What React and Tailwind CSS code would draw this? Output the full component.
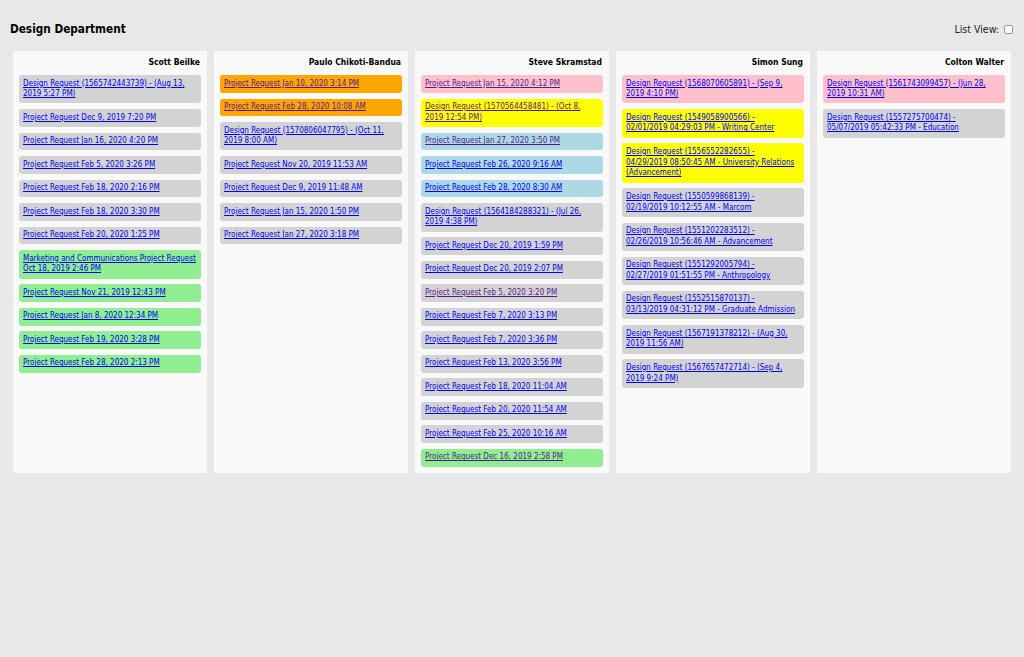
import React from "react";

const BG = {
  gray: "bg-[#d3d3d3]",
  green: "bg-[#90ee90]",
  orange: "bg-[#ffa500]",
  pink: "bg-[#ffc0cb]",
  yellow: "bg-[#ffff00]",
  blue: "bg-[#add8e6]",
};

const columns = [
  {
    name: "Scott Beilke",
    items: [
      ["gray", ["Design Request (1565742443739) - (Aug 13,", "2019 5:27 PM)"]],
      ["gray", ["Project Request Dec 9, 2019 7:20 PM"]],
      ["gray", ["Project Request Jan 16, 2020 4:20 PM"]],
      ["gray", ["Project Request Feb 5, 2020 3:26 PM"]],
      ["gray", ["Project Request Feb 18, 2020 2:16 PM"]],
      ["gray", ["Project Request Feb 18, 2020 3:30 PM"]],
      ["gray", ["Project Request Feb 20, 2020 1:25 PM"]],
      ["green", ["Marketing and Communications Project Request", "Oct 18, 2019 2:46 PM"]],
      ["green", ["Project Request Nov 21, 2019 12:43 PM"]],
      ["green", ["Project Request Jan 8, 2020 12:34 PM"]],
      ["green", ["Project Request Feb 19, 2020 3:28 PM"]],
      ["green", ["Project Request Feb 28, 2020 2:13 PM"]],
    ],
  },
  {
    name: "Paulo Chikoti-Bandua",
    items: [
      ["orange", ["Project Request Jan 10, 2020 3:14 PM"], true],
      ["orange", ["Project Request Feb 28, 2020 10:08 AM"], true],
      ["gray", ["Design Request (1570806047795) - (Oct 11,", "2019 8:00 AM)"]],
      ["gray", ["Project Request Nov 20, 2019 11:53 AM"]],
      ["gray", ["Project Request Dec 9, 2019 11:48 AM"]],
      ["gray", ["Project Request Jan 15, 2020 1:50 PM"]],
      ["gray", ["Project Request Jan 27, 2020 3:18 PM"]],
    ],
  },
  {
    name: "Steve Skramstad",
    items: [
      ["pink", ["Project Request Jan 15, 2020 4:12 PM"], true],
      ["yellow", ["Design Request (1570564458481) - (Oct 8,", "2019 12:54 PM)"], true],
      ["blue", ["Project Request Jan 27, 2020 3:50 PM"], true],
      ["blue", ["Project Request Feb 26, 2020 9:16 AM"]],
      ["blue", ["Project Request Feb 28, 2020 8:30 AM"]],
      ["gray", ["Design Request (1564184288321) - (Jul 26,", "2019 4:38 PM)"]],
      ["gray", ["Project Request Dec 20, 2019 1:59 PM"]],
      ["gray", ["Project Request Dec 20, 2019 2:07 PM"]],
      ["gray", ["Project Request Feb 5, 2020 3:20 PM"], true],
      ["gray", ["Project Request Feb 7, 2020 3:13 PM"]],
      ["gray", ["Project Request Feb 7, 2020 3:36 PM"]],
      ["gray", ["Project Request Feb 13, 2020 3:56 PM"]],
      ["gray", ["Project Request Feb 18, 2020 11:04 AM"]],
      ["gray", ["Project Request Feb 20, 2020 11:54 AM"]],
      ["gray", ["Project Request Feb 25, 2020 10:16 AM"]],
      ["green", ["Project Request Dec 16, 2019 2:58 PM"], true],
    ],
  },
  {
    name: "Simon Sung",
    items: [
      ["pink", ["Design Request (1568070605891) - (Sep 9,", "2019 4:10 PM)"]],
      ["yellow", ["Design Request (1549058900566) -", "02/01/2019 04:29:03 PM - Writing Center"]],
      ["yellow", ["Design Request (1556552282655) -", "04/29/2019 08:50:45 AM - University Relations", "(Advancement)"]],
      ["gray", ["Design Request (1550599868139) -", "02/19/2019 10:12:55 AM - Marcom"]],
      ["gray", ["Design Request (1551202283512) -", "02/26/2019 10:56:46 AM - Advancement"]],
      ["gray", ["Design Request (1551292005794) -", "02/27/2019 01:51:55 PM - Anthropology"]],
      ["gray", ["Design Request (1552515870137) -", "03/13/2019 04:31:12 PM - Graduate Admission"]],
      ["gray", ["Design Request (1567191378212) - (Aug 30,", "2019 11:56 AM)"]],
      ["gray", ["Design Request (1567657472714) - (Sep 4,", "2019 9:24 PM)"]],
    ],
  },
  {
    name: "Colton Walter",
    items: [
      ["pink", ["Design Request (1561743099457) - (Jun 28,", "2019 10:31 AM)"]],
      ["gray", ["Design Request (1557275700474) -", "05/07/2019 05:42:33 PM - Education"]],
    ],
  },
];

function Card({ color, lines, visited }) {
  return (
    <div className={`${BG[color]} rounded-[3px] px-[4px] py-[3.5px] whitespace-nowrap overflow-hidden`}>
      <a
        href="#"
        className={`underline ${visited ? "text-[#551a8b]" : "text-[#0000ee]"}`}
      >
        {lines.map((l, i) => (
          <React.Fragment key={i}>
            {i > 0 && <br />}
            {l}
          </React.Fragment>
        ))}
      </a>
    </div>
  );
}

export default function App() {
  return (
    <div className="min-h-[657px] bg-[#e8e8e8] text-black font-['DejaVu_Sans_Condensed','DejaVu_Sans',sans-serif]">
      <div className="flex items-center justify-between pl-[10px] pr-[11px] pt-[21px] h-[51px] pb-[13px]">
        <h1 className="text-[11.7px] font-bold leading-[17px]">Design Department</h1>
        <label className="flex items-center gap-[5px] text-[10.5px] text-[#222]">
          List View:
          <span className="inline-block w-[9px] h-[9px] border border-[#999] rounded-[2px] bg-white" />
        </label>
      </div>
      <div className="grid grid-cols-5 gap-[7px] px-[13px] items-stretch">
        {columns.map((col) => (
          <div key={col.name} className="bg-[#f9f9f9] pt-[6px] pb-[6px] px-[6px]">
            <div className="text-right font-bold text-[8.5px] leading-[11px] pr-[1px] mb-[7px]">
              {col.name}
            </div>
            <div className="flex flex-col gap-[5.8px] text-[8px] leading-[10.7px]">
              {col.items.map(([c, l, v], i) => (
                <Card key={i} color={c} lines={l} visited={v} />
              ))}
            </div>
          </div>
        ))}
      </div>
    </div>
  );
}
